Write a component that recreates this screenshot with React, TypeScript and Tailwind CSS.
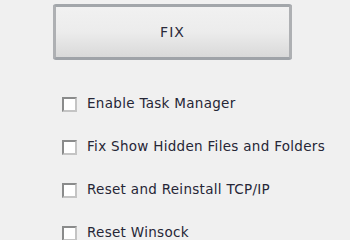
import React from 'react';

const options = [
  'Enable Task Manager',
  'Fix Show Hidden Files and Folders',
  'Reset and Reinstall TCP/IP',
  'Reset Winsock',
];

const App: React.FC = () => {
  return (
    <div className="w-[350px] h-[240px] overflow-hidden bg-[#f0f0f0] font-['DejaVu_Sans',sans-serif] text-[#262636]">
      <div className="pt-[4px] pl-[53px]">
        <button className="w-[239px] h-[56px] rounded-[3px] border-[3px] border-[#aeb0b3] border-t-[#a2a6aa] border-b-[#9fa3a8] bg-gradient-to-b from-[#f1f1f1] via-[#ececec] to-[#d9d9d9] text-[14px] tracking-[1px] text-[#2a2a3a]">
          FIX
        </button>
      </div>
      {/* checkbox list */}
      <div className="flex flex-col gap-[27px] pl-[62px] pt-[36px]">
        {options.map((label) => (
          <label key={label} className="flex items-center gap-[10px] h-[16px]">
            <span className="w-[15px] h-[15px] border-2 border-[#8a8b8b] border-b-[#c4c4c4] border-r-[#c4c4c4] bg-white shrink-0" />
            <span className="text-[13.5px] tracking-[0.3px] leading-none">{label}</span>
          </label>
        ))}
      </div>
    </div>
  );
};

export default App;
